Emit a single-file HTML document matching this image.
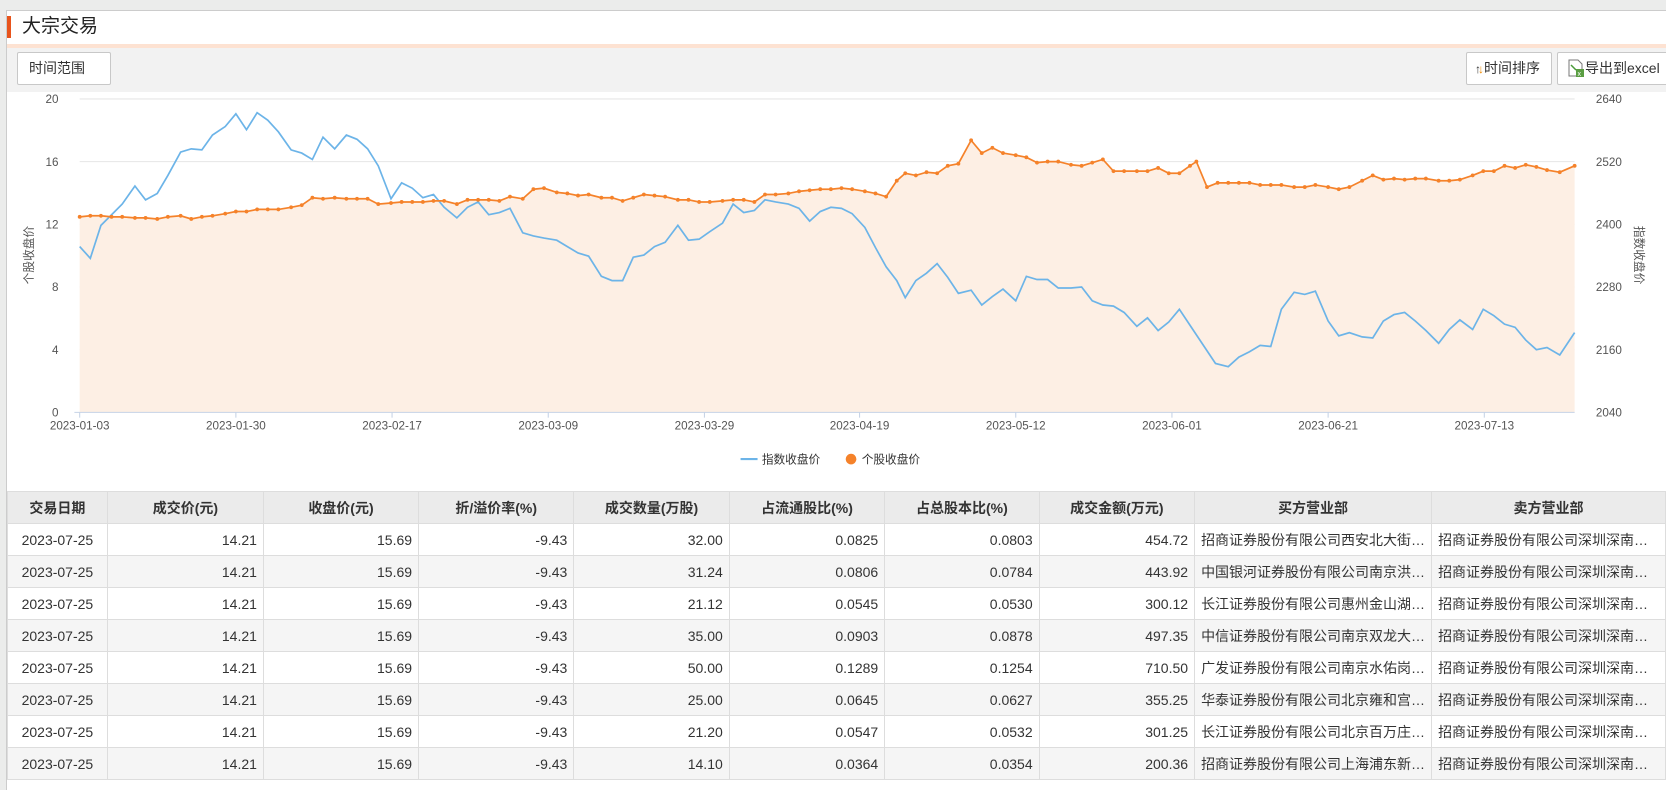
<!DOCTYPE html>
<html><head><meta charset="utf-8"><style>
*{margin:0;padding:0;box-sizing:border-box}
body{width:1666px;height:779px;overflow:hidden;background:#ebeceb;font-family:"Liberation Sans","Noto Sans CJK SC",sans-serif;position:relative}
.page{position:absolute;left:6px;top:10px;width:1670px;height:780px;background:#fff;border-left:1px solid #ccc;border-top:1px solid #ccc}
.bar{position:absolute;left:0;top:5px;width:4px;height:22px;background:#e8541c}
.title{position:absolute;left:15px;top:3px;font-size:19px;color:#222;line-height:26px}
.band{position:absolute;left:0;top:33px;width:100%;height:4px;background:#fde2d2}
.tool{position:absolute;left:0;top:37px;width:100%;height:44px;background:#f2f2f2}
.btn{position:absolute;background:#fff;border:1px solid #c8c8c8;border-radius:2px;font-size:14px;color:#333;line-height:31px;height:33px}
table{position:absolute;left:7px;top:491px;border-collapse:collapse;table-layout:fixed;font-size:14px;color:#333}
td,th{height:32px;border:1px solid #ddd;white-space:nowrap;overflow:hidden;padding:0 6px}
th{background:#ebebeb;font-weight:bold;font-size:14px;color:#333}
td{text-align:right}
td.c{text-align:center}td.l{text-align:left}
tr:nth-child(odd) td{background:#f5f5f5}
</style></head><body>
<div class="page">
<div class="bar"></div><div class="title">大宗交易</div>
<div class="band"></div><div class="tool"></div>
<div class="btn" style="left:10px;top:41px;width:94px;padding-left:11px">时间范围</div>
<div class="btn" style="left:1459px;top:41px;width:86px;padding-left:8px"><span style="font-size:12px;color:#333">↑</span><span style="font-size:12px;color:#f08a00;margin-left:-3px">↓</span>时间排序</div>
<div class="btn" style="left:1550px;top:41px;width:120px;padding-left:9px"><svg width="18" height="18" viewBox="0 0 18 18" style="vertical-align:-4px"><path d="M2 1h9l4 4v12H2z" fill="#fff" stroke="#777"/><path d="M4 6l5 5" stroke="#4a9a3a" stroke-width="1.5"/><rect x="9" y="10" width="8" height="8" fill="#5a9e42"/><text x="10.5" y="17" font-size="7" fill="#fff" font-family="Liberation Sans">x</text></svg>导出到excel</div>
</div>
<svg style="position:absolute;left:0;top:0" width="1666" height="779" viewBox="0 0 1568 733" font-family="Liberation Sans, sans-serif">
<g stroke="#e6e6e6" stroke-width="1"><line x1="75" y1="93" x2="1482" y2="93"/><line x1="75" y1="152" x2="1482" y2="152"/><line x1="75" y1="211" x2="1482" y2="211"/><line x1="75" y1="270" x2="1482" y2="270"/><line x1="75" y1="329" x2="1482" y2="329"/></g>
<polygon id="fill" fill="#fdefe4" points=""/>
<line x1="70" y1="388" x2="1482" y2="388" stroke="#c6d3e6"/>
<g stroke="#c6d3e6"><line x1="75" y1="388" x2="75" y2="393"/><line x1="222" y1="388" x2="222" y2="393"/><line x1="369" y1="388" x2="369" y2="393"/><line x1="516" y1="388" x2="516" y2="393"/><line x1="663" y1="388" x2="663" y2="393"/><line x1="809" y1="388" x2="809" y2="393"/><line x1="956" y1="388" x2="956" y2="393"/><line x1="1103" y1="388" x2="1103" y2="393"/><line x1="1250" y1="388" x2="1250" y2="393"/><line x1="1397" y1="388" x2="1397" y2="393"/></g>
<g font-size="11" fill="#555" text-anchor="end"><text x="55" y="97">20</text><text x="55" y="156">16</text><text x="55" y="215">12</text><text x="55" y="274">8</text><text x="55" y="333">4</text><text x="55" y="392">0</text></g>
<g font-size="11" fill="#555"><text x="1502" y="97">2640</text><text x="1502" y="156">2520</text><text x="1502" y="215">2400</text><text x="1502" y="274">2280</text><text x="1502" y="333">2160</text><text x="1502" y="392">2040</text></g>
<g font-size="11" fill="#555" text-anchor="middle"><text x="75" y="404">2023-01-03</text><text x="222" y="404">2023-01-30</text><text x="369" y="404">2023-02-17</text><text x="516" y="404">2023-03-09</text><text x="663" y="404">2023-03-29</text><text x="809" y="404">2023-04-19</text><text x="956" y="404">2023-05-12</text><text x="1103" y="404">2023-06-01</text><text x="1250" y="404">2023-06-21</text><text x="1397" y="404">2023-07-13</text></g>
<text transform="translate(31,240) rotate(-90)" font-size="11" fill="#555" text-anchor="middle" font-family="Noto Sans CJK SC">个股收盘价</text>
<text transform="translate(1539,240) rotate(90)" font-size="11" fill="#555" text-anchor="middle" font-family="Noto Sans CJK SC">指数收盘价</text>
<polyline id="blue" fill="none" stroke="#6cb4e8" stroke-width="1.6" points="75,232 85,243 95,212 105,202 115,192 127,175 137,188 148,182 158,165 170,143 180,140 190,141 200,127 212,119 222,107 232,122 242,106 252,113 262,124 274,141 284,144 294,150 304,129 315,140 326,127 336,131 346,140 356,156 368,187 378,172 388,177 398,186 408,183 418,195 430,205 440,195 450,190 460,202 470,200 480,196 492,219 502,222 512,224 524,226 534,232 544,238 554,241 566,260 576,264 586,264 596,242 606,240 616,232 626,228 638,212 648,226 658,225 668,218 680,210 690,192 700,200 710,198 720,188 730,190 742,192 752,196 762,208 772,199 782,195 792,196 802,201 814,214 824,233 834,251 844,264 852,280 862,264 872,257 882,248 892,261 902,276 914,273 924,287 934,279 944,272 956,283 966,260 976,263 986,263 996,271 1008,271 1018,270 1028,283 1038,287 1048,288 1058,294 1070,307 1080,299 1090,311 1100,303 1110,291 1120,306 1132,324 1144,342 1156,345 1166,336 1176,331 1186,325 1196,326 1206,291 1218,275 1228,277 1238,274 1250,302 1260,316 1270,313 1282,317 1292,318 1302,302 1312,296 1322,294 1332,302 1342,311 1354,323 1364,310 1374,301 1386,310 1396,291 1406,297 1416,305 1426,308 1436,320 1446,329 1456,327 1468,334 1482,313"/>
<polyline id="or" fill="none" stroke="#f5822a" stroke-width="1.6" points="75,204 85,203 95,203 105,204 115,204 127,205 137,205 148,206 158,204 170,203 180,206 190,204 200,203 212,201 222,199 232,199 242,197 252,197 262,197 274,195 284,193 294,186 304,187 315,186 326,187 336,187 346,187 356,192 368,191 378,190 388,190 398,190 408,189 418,189 430,192 440,188 450,188 460,188 470,189 480,185 492,187 502,178 512,177 524,181 534,182 544,184 554,183 566,186 576,186 586,189 596,186 606,183 616,184 626,185 638,188 648,188 658,190 668,190 680,189 690,188 700,188 710,190 720,183 730,183 742,182 752,180 762,179 772,178 782,178 792,177 802,178 814,180 824,182 834,185 844,170 852,163 862,165 872,162 882,163 892,156 902,154 914,132 924,144 934,139 944,144 956,146 966,148 976,153 986,152 996,152 1008,155 1018,156 1028,153 1038,150 1048,161 1058,161 1070,161 1080,161 1090,158 1100,163 1110,163 1120,156 1126,152 1136,176 1146,172 1156,172 1166,172 1176,172 1186,174 1196,174 1206,174 1218,176 1228,176 1238,174 1250,176 1260,178 1270,176 1282,170 1292,165 1302,169 1312,168 1322,169 1332,168 1342,168 1354,170 1364,170 1374,169 1386,165 1396,161 1406,161 1416,156 1426,158 1436,155 1446,157 1456,160 1468,162 1482,156"/>
<g id="dots" fill="#f5822a"></g>
<line x1="697" y1="432" x2="713" y2="432" stroke="#6cb4e8" stroke-width="2"/>
<text x="717" y="436" font-size="11" fill="#333" font-family="Noto Sans CJK SC">指数收盘价</text>
<circle cx="801" cy="432" r="5" fill="#f5822a"/>
<text x="811" y="436" font-size="11" fill="#333" font-family="Noto Sans CJK SC">个股收盘价</text>
</svg>
<script>
var o=document.getElementById('or').getAttribute('points').trim();
document.getElementById('fill').setAttribute('points',o+' 1482,388 75,388');
var g=document.getElementById('dots'),s='';
o.split(' ').forEach(function(p){var a=p.split(',');s+='<circle cx="'+a[0]+'" cy="'+a[1]+'" r="1.8"/>';});
g.innerHTML=s;
</script>
<table>
<colgroup><col style="width:100px"><col style="width:157px"><col style="width:156px"><col style="width:156px"><col style="width:156px"><col style="width:156px"><col style="width:155px"><col style="width:156px"><col style="width:233px"><col style="width:234px"></colgroup>
<tr><th>交易日期</th><th>成交价(元)</th><th>收盘价(元)</th><th>折/溢价率(%)</th><th>成交数量(万股)</th><th>占流通股比(%)</th><th>占总股本比(%)</th><th>成交金额(万元)</th><th>买方营业部</th><th>卖方营业部</th></tr>
<tr><td class="c">2023-07-25</td><td>14.21</td><td>15.69</td><td>-9.43</td><td>32.00</td><td>0.0825</td><td>0.0803</td><td>454.72</td><td class="l">招商证券股份有限公司西安北大街…</td><td class="l">招商证券股份有限公司深圳深南…</td></tr>
<tr><td class="c">2023-07-25</td><td>14.21</td><td>15.69</td><td>-9.43</td><td>31.24</td><td>0.0806</td><td>0.0784</td><td>443.92</td><td class="l">中国银河证券股份有限公司南京洪…</td><td class="l">招商证券股份有限公司深圳深南…</td></tr>
<tr><td class="c">2023-07-25</td><td>14.21</td><td>15.69</td><td>-9.43</td><td>21.12</td><td>0.0545</td><td>0.0530</td><td>300.12</td><td class="l">长江证券股份有限公司惠州金山湖…</td><td class="l">招商证券股份有限公司深圳深南…</td></tr>
<tr><td class="c">2023-07-25</td><td>14.21</td><td>15.69</td><td>-9.43</td><td>35.00</td><td>0.0903</td><td>0.0878</td><td>497.35</td><td class="l">中信证券股份有限公司南京双龙大…</td><td class="l">招商证券股份有限公司深圳深南…</td></tr>
<tr><td class="c">2023-07-25</td><td>14.21</td><td>15.69</td><td>-9.43</td><td>50.00</td><td>0.1289</td><td>0.1254</td><td>710.50</td><td class="l">广发证券股份有限公司南京水佑岗…</td><td class="l">招商证券股份有限公司深圳深南…</td></tr>
<tr><td class="c">2023-07-25</td><td>14.21</td><td>15.69</td><td>-9.43</td><td>25.00</td><td>0.0645</td><td>0.0627</td><td>355.25</td><td class="l">华泰证券股份有限公司北京雍和宫…</td><td class="l">招商证券股份有限公司深圳深南…</td></tr>
<tr><td class="c">2023-07-25</td><td>14.21</td><td>15.69</td><td>-9.43</td><td>21.20</td><td>0.0547</td><td>0.0532</td><td>301.25</td><td class="l">长江证券股份有限公司北京百万庄…</td><td class="l">招商证券股份有限公司深圳深南…</td></tr>
<tr><td class="c">2023-07-25</td><td>14.21</td><td>15.69</td><td>-9.43</td><td>14.10</td><td>0.0364</td><td>0.0354</td><td>200.36</td><td class="l">招商证券股份有限公司上海浦东新…</td><td class="l">招商证券股份有限公司深圳深南…</td></tr>
</table>
</body></html>
